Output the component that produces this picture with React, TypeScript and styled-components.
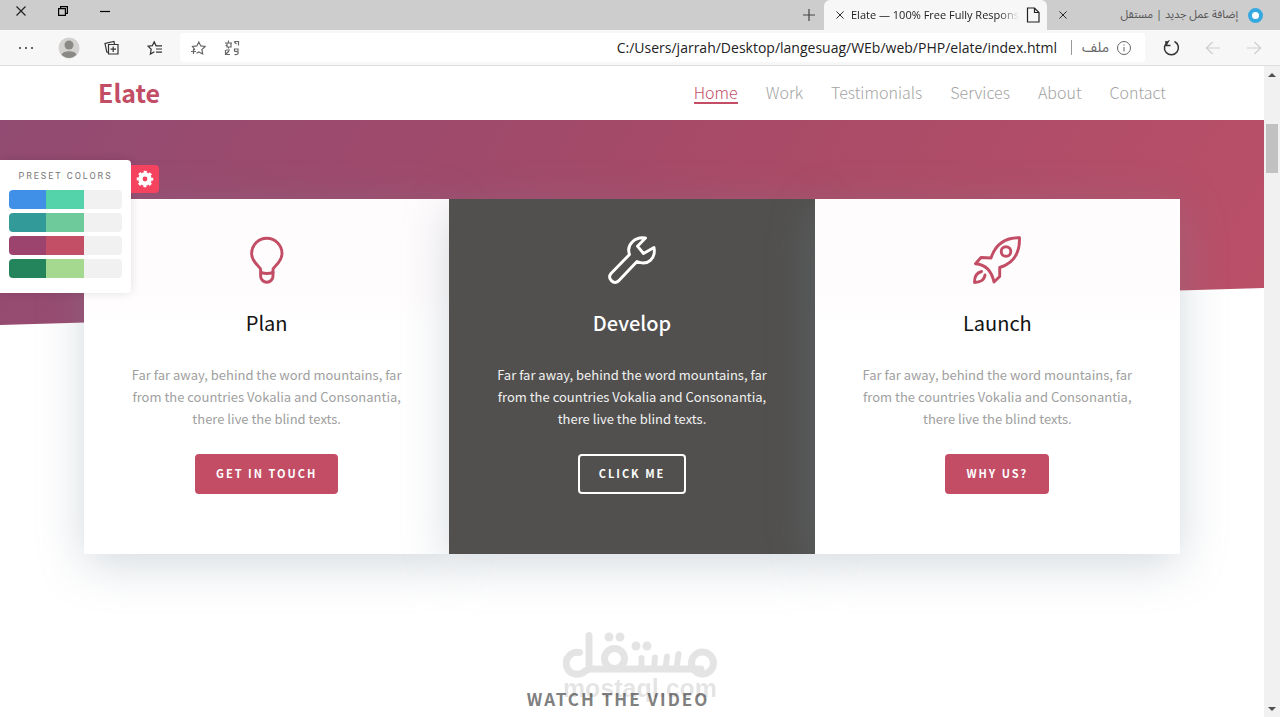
import React from "react";
import styled, { createGlobalStyle, css } from "styled-components";

const rose = "#c24d65";
const sans = `"Noto Sans CJK SC", "Noto Sans", sans-serif`;
const ui = `"Open Sans", "Noto Sans", "DejaVu Sans", sans-serif`;
const arabic = `"Noto Sans Arabic", "DejaVu Sans", sans-serif`;

const GlobalStyle = createGlobalStyle`
  *, *::before, *::after { box-sizing: border-box; }
  body { margin: 0; background: #fff; font-family: ${sans}; }
  h1, h2, p, ul { margin: 0; padding: 0; }
  ul { list-style: none; }
  a { color: inherit; text-decoration: none; }
  button { margin: 0; padding: 0; border: 0; background: none; font: inherit; color: inherit; cursor: pointer; }
  svg { display: block; flex: none; }
`;

const Window = styled.div`
  display: flex;
  flex-direction: column;
  height: 100vh;
  overflow: hidden;
`;

/* Browser frame */

const TitleBar = styled.div`
  display: flex;
  flex: none;
  justify-content: space-between;
  height: 30px;
  background: #cdcdcd;
`;

const WindowButtons = styled.div`
  display: flex;
  height: 22px;
`;

const WindowButton = styled.button`
  display: grid;
  place-items: center;
  width: 42px;
`;

const Tabs = styled.div`
  display: flex;
`;

const NewTab = styled.button`
  display: grid;
  place-items: center;
  width: 30px;
`;

const Tab = styled.div<{ $active?: boolean }>`
  display: flex;
  align-items: center;
  gap: 7px;
  padding: 0 10px 0 12px;
  color: ${(p) => (p.$active ? "#222" : "#555")};
  ${(p) =>
    p.$active
      ? css`
          width: 223px;
          border-radius: 6px 6px 0 0;
          background: #f7f7f7;
        `
      : css`
          width: 233px;
        `}
`;

const TabTitle = styled.span<{ $arabic?: boolean }>`
  flex: 1;
  white-space: nowrap;
  font-family: ${(p) => (p.$arabic ? arabic : ui)};
  font-size: 11px;
  line-height: 20px;
  text-align: ${(p) => (p.$arabic ? "right" : "left")};
  ${(p) =>
    !p.$arabic &&
    css`
      mask-image: linear-gradient(90deg, #000 88%, transparent);
    `}
`;

const Favicon = styled.span`
  width: 15px;
  height: 15px;
  margin: 0 7px 0 3px;
  border: 4px solid #36a9e1;
  border-radius: 50%;
  background: #fff;
`;

const Toolbar = styled.div`
  display: flex;
  flex: none;
  align-items: center;
  height: 36px;
  padding: 0 6px 0 4px;
  border-bottom: 1px solid #dedede;
  background: #f7f7f7;
`;

const ToolButton = styled.button<{ $wide?: boolean; $faded?: boolean }>`
  display: grid;
  place-items: center;
  width: ${(p) => (p.$wide ? "43px" : "41px")};
  height: 28px;
  color: ${(p) => (p.$faded ? "#cfcfcf" : "#333")};
`;

const AddressBar = styled.div`
  display: flex;
  flex: 1;
  align-items: center;
  gap: 14px;
  height: 29px;
  margin: 0 6px 0 4px;
  padding: 0 14px 0 10px;
  border-radius: 3px;
  background: #fff;
  color: #666;
`;

const AddressTools = styled.div`
  display: flex;
  gap: 18px;
`;

const AddressInput = styled.input`
  flex: 1;
  min-width: 0;
  padding: 0;
  border: 0;
  outline: 0;
  background: transparent;
  color: #222;
  font-family: ${ui};
  font-size: 14px;
  line-height: 20px;
  text-align: right;
`;

const SiteInfo = styled.button`
  display: flex;
  align-items: center;
  gap: 8px;
  padding-left: 10px;
  border-left: 1px solid #999;
  font-family: ${arabic};
  font-size: 14px;
  line-height: 15px;
`;

/* Page */

const Viewport = styled.div`
  display: flex;
  flex: 1;
  min-height: 0;
`;

const Page = styled.div`
  position: relative;
  flex: 1;
  min-width: 0;
  overflow: hidden;
`;

const Scrollbar = styled.div`
  display: flex;
  flex: none;
  flex-direction: column;
  align-items: center;
  justify-content: space-between;
  width: 16px;
  padding: 6px 2px 5px;
  background: #f1f1f1;
`;

const Track = styled.div`
  flex: 1;
  align-self: stretch;
  padding-top: 46px;
`;

const Thumb = styled.div`
  height: 49px;
  background: #c1c1c1;
`;

const SiteHeader = styled.header`
  height: 54px;
  background: #fff;
`;

const Container = styled.div`
  width: 100%;
  max-width: 1096px;
  margin: 0 auto;
`;

const HeaderRow = styled(Container)`
  display: flex;
  align-items: center;
  justify-content: space-between;
  height: 54px;
  padding: 0 14px;
`;

const Logo = styled.a`
  padding-bottom: 2px;
  color: ${rose};
  font-size: 25px;
  font-weight: 700;
  line-height: 36px;
`;

const Nav = styled.nav`
  display: flex;
  gap: 28px;
`;

const NavLink = styled.a<{ $active?: boolean }>`
  border-bottom: 2px solid ${(p) => (p.$active ? rose : "transparent")};
  color: ${(p) => (p.$active ? rose : "#a3a3a3")};
  font-size: 16px;
  font-weight: 300;
  line-height: 20px;
`;

const HeroBand = styled.div`
  height: 205px;
  background: linear-gradient(120deg, #924b72 0%, #a64a68 50%, #bb5068 100%);
  clip-path: polygon(0 0, 100% 0, 100% 82%, 0 100%);
`;

const Cards = styled(Container)`
  position: relative;
  display: grid;
  grid-template-columns: repeat(3, 1fr);
  margin-top: -126px;
`;

const Card = styled.article<{ $dark?: boolean }>`
  display: flex;
  flex-direction: column;
  align-items: center;
  height: 355px;
  padding: 37px 44px 0;
  background: ${(p) =>
    p.$dark ? "#51504e" : "linear-gradient(#fffcfd 0 26%, #fff 36%)"};
  box-shadow: 0 10px 44px rgba(120, 140, 155, 0.32);
  color: ${(p) => (p.$dark ? "#fff" : rose)};
  text-align: center;
`;

const CardTitle = styled.h2<{ $dark?: boolean }>`
  margin-top: 24px;
  color: ${(p) => (p.$dark ? "#fff" : "#111")};
  font-size: 20px;
  font-weight: ${(p) => (p.$dark ? 500 : 400)};
  line-height: 30px;
`;

const CardText = styled.p<{ $dark?: boolean }>`
  margin: 26px 0 24px;
  color: ${(p) => (p.$dark ? "#f2f2f2" : "#a0a0a0")};
  font-size: 13px;
  font-weight: 400;
  line-height: 22px;
`;

const CardButton = styled.button<{ $dark?: boolean }>`
  height: 40px;
  padding: 0 19px 2px;
  border: 2px solid ${(p) => (p.$dark ? "#fff" : rose)};
  border-radius: 4px;
  background: ${(p) => (p.$dark ? "transparent" : rose)};
  color: #fff;
  font-size: 11px;
  font-weight: 700;
  letter-spacing: 2px;
  text-transform: uppercase;
`;

const VideoSection = styled.section`
  position: relative;
  padding: 132px 28px 0 0;
  text-align: center;
`;

const VideoTitle = styled.h2`
  color: #808080;
  font-size: 17px;
  font-weight: 700;
  letter-spacing: 2px;
  line-height: 26px;
  text-transform: uppercase;
`;

const Watermark = styled.div`
  position: absolute;
  top: 76px;
  left: 0;
  right: 0;
  display: flex;
  flex-direction: column;
  align-items: center;
  padding-left: 16px;
  color: #000;
  opacity: 0.1;
  pointer-events: none;
`;

const WatermarkName = styled.span`
  font-family: "Liberation Sans", Arial, sans-serif;
  font-size: 25px;
  font-weight: 700;
  line-height: 20px;
`;

const Presets = styled.aside`
  position: absolute;
  top: 94px;
  left: 0;
  display: flex;
  align-items: flex-start;
`;

const PresetPanel = styled.div`
  width: 131px;
  height: 133px;
  padding: 9px 9px 0;
  border-radius: 0 4px 4px 0;
  background: #fff;
  box-shadow: 0 0 10px rgba(0, 0, 0, 0.12);
`;

const PresetTitle = styled.p`
  margin-bottom: 7px;
  color: #777;
  font-family: Roboto, sans-serif;
  font-size: 9px;
  letter-spacing: 2px;
  line-height: 14px;
  text-align: center;
  white-space: nowrap;
`;

const PresetList = styled.ul`
  display: grid;
  gap: 4px;
`;

const Swatch = styled.button<{ $first: string; $second: string }>`
  display: block;
  width: 100%;
  height: 19px;
  border-radius: 4px;
  background: linear-gradient(
    90deg,
    ${(p) => p.$first} 0 33%,
    ${(p) => p.$second} 33% 66%,
    #f1f1f1 66%
  );
`;

const GearButton = styled.button`
  display: grid;
  place-items: center;
  width: 28px;
  height: 28px;
  margin-top: 5px;
  border-radius: 0 4px 4px 0;
  background: #f5425f;
  color: #fff;
`;

/* Icons */

const Cross = ({ size }: { size: number }) => (
  <svg width={size} height={size} viewBox="0 0 10 10" fill="none" stroke="#222" strokeWidth="1.2">
    <path d="M.5.5l9 9M9.5.5l-9 9" />
  </svg>
);

const Gear = () => (
  <svg width="18" height="18" viewBox="0 0 18 18" fill="none" stroke="currentColor">
    <circle cx="9" cy="9" r="4.600" strokeWidth="4.400" />
    <circle cx="9" cy="9" r="7" strokeWidth="2.600" strokeDasharray="2.949 2.549" strokeDashoffset="1.474" />
  </svg>
);

const line = { fill: "none", stroke: "currentColor", strokeWidth: 1.2 };

const CardIcon = ({ children }: { children: React.ReactNode }) => (
  <svg
    width="48"
    height="48"
    viewBox="0 0 48 48"
    fill="none"
    stroke="currentColor"
    strokeWidth="2.9"
    strokeLinecap="round"
    strokeLinejoin="round"
  >
    {children}
  </svg>
);

const Bulb = () => (
  <CardIcon>
    <path d="M17.6 40V33.500C17.600 31 8.600 26.500 8.600 17.500a15.200 15.200 0 0 1 30.400 0c0 9-9 13.500-9 16V40a6.200 6.200 0 0 1-12.400 0Z" />
    <path d="M18 36.500q6 2 12 0" />
  </CardIcon>
);

const Wrench = () => (
  <CardIcon>
    <path d="M21.500 18.500C18 8.500 27 .5 37.500 2L29.500 10.200 35.500 17.500 46 11.500C48 22 40 30.500 29 25.500L10.500 45C5.500 49-1 42.500 3 37.500Z" />
  </CardIcon>
);

const Rocket = () => (
  <CardIcon>
    <path d="M46.500 1.700C33 1.500 22.500 8 18 22L8 21.500 2.500 27.700C12 28.500 18.500 34 21 46L26.700 40.500V31.500C40 27.500 47 18 46.500 1.700Z" />
    <circle cx="33" cy="15.500" r="4.800" />
    <path d="M8.500 35.500C3 37 1.300 41 1.500 46.500 7 46.500 11.500 44 12 39" />
  </CardIcon>
);

const WordmarkLogo = () => (
  <svg width="154" height="48" viewBox="0 0 154 48" fill="none" stroke="currentColor" strokeWidth="7" strokeLinecap="round">
    <path d="M16.500 22.500A11 11 0 1 0 22 41L26 39H138M26 5.500V38" />
    <path d="M78.500 28V38M92 27.500L91 38M104 26.500L102.500 38M115.500 24L113.500 38" strokeWidth="6" />
    <circle cx="51.500" cy="28.500" r="10" />
    <circle cx="139.500" cy="33" r="11" />
    <g fill="currentColor" stroke="none">
      <circle cx="46" cy="7" r="4.500" />
      <circle cx="57" cy="7" r="4.500" />
      <circle cx="73" cy="16" r="4.500" />
      <circle cx="84" cy="16" r="4.500" />
    </g>
  </svg>
);

const copy =
  "Far far away, behind the word mountains, far from the countries Vokalia and Consonantia, there live the blind texts.";

const cards = [
  { title: "Plan", action: "Get in touch", icon: <Bulb />, dark: false },
  { title: "Develop", action: "Click me", icon: <Wrench />, dark: true },
  { title: "Launch", action: "Why us?", icon: <Rocket />, dark: false },
];

const navItems = ["Home", "Work", "Testimonials", "Services", "About", "Contact"];

const presets = [
  ["#4090e8", "#54d3aa"],
  ["#329a99", "#6ec99b"],
  ["#9d446e", "#c34f66"],
  ["#24845c", "#a4d98f"],
];

export default function App() {
  return (
    <Window>
      <GlobalStyle />
      <TitleBar>
        <WindowButtons>
          <WindowButton aria-label="Close">
            <Cross size={10} />
          </WindowButton>
          <WindowButton aria-label="Restore">
            <svg width="10" height="10" viewBox="0 0 10 10" {...line}>
              <path d="M.600 2.600h6.800v6.800H.600zM2.600 2.600v-2h6.800v6.800h-2" />
            </svg>
          </WindowButton>
          <WindowButton aria-label="Minimize">
            <svg width="10" height="10" viewBox="0 0 10 10" {...line}>
              <path d="M0 5.500h10" />
            </svg>
          </WindowButton>
        </WindowButtons>
        <Tabs>
          <NewTab aria-label="New tab">
            <svg width="12" height="12" viewBox="0 0 12 12" {...line} stroke="#444">
              <path d="M6 0v12M0 6h12" />
            </svg>
          </NewTab>
          <Tab $active>
            <button aria-label="Close tab">
              <Cross size={8} />
            </button>
            <TabTitle>Elate — 100% Free Fully Respons</TabTitle>
            <svg width="14" height="16" viewBox="0 0 14 16" {...line}>
              <path d="M1.500 1h7L13 5.500V15H1.500zM8.500 1v4.500H13" />
            </svg>
          </Tab>
          <Tab>
            <button aria-label="Close tab">
              <Cross size={8} />
            </button>
            <TabTitle $arabic>
              <bdi>إضافة عمل جديد | مستقل</bdi>
            </TabTitle>
            <Favicon />
          </Tab>
        </Tabs>
      </TitleBar>

      <Toolbar>
        <ToolButton $wide aria-label="Settings">
          <svg width="16" height="4" viewBox="0 0 16 4" fill="currentColor">
            <circle cx="2" cy="2" r="1" />
            <circle cx="8" cy="2" r="1" />
            <circle cx="14" cy="2" r="1" />
          </svg>
        </ToolButton>
        <ToolButton $wide aria-label="Profile">
          <svg width="22" height="22" viewBox="0 0 22 22">
            <circle cx="11" cy="11" r="10.500" fill="#d4d2d0" />
            <circle cx="11" cy="8" r="4.500" fill="#8b8986" />
            <path d="M3.500 17.500C5 13 17 13 18.500 17.500 15 22 7 22 3.500 17.500Z" fill="#8b8986" />
          </svg>
        </ToolButton>
        <ToolButton $wide aria-label="Collections">
          <svg width="16" height="16" viewBox="0 0 16 16" {...line}>
            <path d="M4.500 4.500h9.500v9.500H4.500zM9.200 6.500v5.500M6.500 9.200H12M4.500 12.500L2.800 12 1 3.500 10 1.500l.6 3" />
          </svg>
        </ToolButton>
        <ToolButton $wide aria-label="Favorites">
          <svg width="16" height="16" viewBox="0 0 16 16" {...line}>
            <path d="M9 5.500L7.200 1.800 5.400 5.600 1 6.200l3.200 3L3.400 14l4-2.300M7.200 1.800L9 5.800H15M9 9h6M9 12.200h6" />
          </svg>
        </ToolButton>
        <AddressBar>
          <AddressTools>
            <button aria-label="Add to favorites">
              <svg width="16" height="16" viewBox="0 0 16 16" {...line}>
                <path d="M5 9.800L2.500 6.500l4.300-.6L8.800 2l2 3.900 4.300.6-3.200 3.100.8 4.400-3.900-2-2.300 1.200M1 11.500h5M3.500 9v5" />
              </svg>
            </button>
            <button aria-label="Translate">
              <svg width="16" height="16" viewBox="0 0 16 16" {...line}>
                <path d="M4.500.500v2M1 3h7M3 3.500v3.500h4V3.500M1.500 5.500h1M4.500 7v1.500M10 1.500l2.500 2.500M11 1.500h3.500v4M14.500 9H10.500v2.500M10.500 11.500c5-1 5 4 0 3M14 8.500v3M1.500 10v4.500H6M2 14l3-3M2 10h4" />
              </svg>
            </button>
          </AddressTools>
          <AddressInput
            aria-label="Address"
            defaultValue="C:/Users/jarrah/Desktop/langesuag/WEb/web/PHP/elate/index.html"
          />
          <SiteInfo>
            ملف
            <svg width="14" height="14" viewBox="0 0 14 14" {...line} strokeWidth="1">
              <circle cx="7" cy="7" r="6.500" />
              <path d="M7 6v4.500M7 3.500v1.200" />
            </svg>
          </SiteInfo>
        </AddressBar>
        <ToolButton aria-label="Reload">
          <svg width="18" height="18" viewBox="0 0 18 18" {...line} strokeWidth="1.500">
            <path d="M3 2v4.500h4.500M11.500 2.500a7 7 0 1 1-6.500.2L3.200 5.800" />
          </svg>
        </ToolButton>
        <ToolButton aria-label="Forward" $faded>
          <svg width="16" height="14" viewBox="0 0 16 14" {...line}>
            <path d="M15 7H1.500M7.500 1l-6 6 6 6" />
          </svg>
        </ToolButton>
        <ToolButton aria-label="Back" $faded>
          <svg width="16" height="14" viewBox="0 0 16 14" {...line}>
            <path d="M1 7h13.500M8.500 1l6 6-6 6" />
          </svg>
        </ToolButton>
      </Toolbar>

      <Viewport>
        <Page>
          <SiteHeader>
            <HeaderRow>
              <Logo href="#home">Elate</Logo>
              <Nav>
                {navItems.map((item, i) => (
                  <NavLink key={item} href={`#${item.toLowerCase()}`} $active={i === 0}>
                    {item}
                  </NavLink>
                ))}
              </Nav>
            </HeaderRow>
          </SiteHeader>

          <main>
            <HeroBand />
            <Cards>
              {cards.map((card) => (
                <Card key={card.title} $dark={card.dark}>
                  {card.icon}
                  <CardTitle $dark={card.dark}>{card.title}</CardTitle>
                  <CardText $dark={card.dark}>{copy}</CardText>
                  <CardButton $dark={card.dark}>{card.action}</CardButton>
                </Card>
              ))}
            </Cards>
            <VideoSection>
              <VideoTitle>Watch the video</VideoTitle>
              <Watermark>
                <WordmarkLogo />
                <WatermarkName>mostaql.com</WatermarkName>
              </Watermark>
            </VideoSection>
          </main>

          <Presets>
            <PresetPanel>
              <PresetTitle>PRESET COLORS</PresetTitle>
              <PresetList>
                {presets.map(([first, second]) => (
                  <li key={first}>
                    <Swatch $first={first} $second={second} aria-label={`Preset ${first} ${second}`} />
                  </li>
                ))}
              </PresetList>
            </PresetPanel>
            <GearButton aria-label="Preset settings">
              <Gear />
            </GearButton>
          </Presets>
        </Page>

        <Scrollbar aria-hidden="true">
          <svg width="8" height="6" viewBox="0 0 8 6" fill="#505050">
            <path d="M4 1l4 4H0z" />
          </svg>
          <Track>
            <Thumb />
          </Track>
          <svg width="8" height="6" viewBox="0 0 8 6" fill="#505050">
            <path d="M0 1h8L4 5z" />
          </svg>
        </Scrollbar>
      </Viewport>
    </Window>
  );
}
